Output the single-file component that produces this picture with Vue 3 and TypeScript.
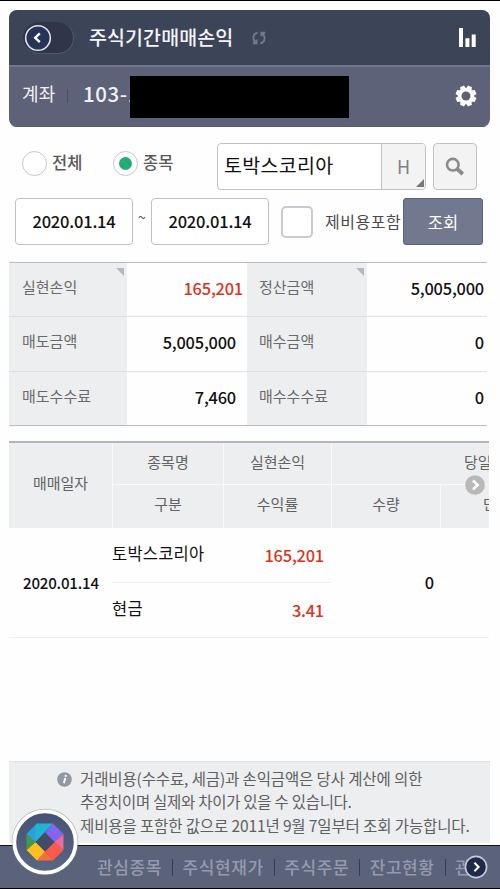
<script setup lang="ts">
interface SummaryCell {
  label: string
  value: string
  profit?: boolean
  corner?: boolean
}

const summary: SummaryCell[] = [
  { label: '실현손익', value: '165,201', profit: true, corner: true },
  { label: '정산금액', value: '5,005,000', corner: true },
  { label: '매도금액', value: '5,005,000' },
  { label: '매수금액', value: '0' },
  { label: '매도수수료', value: '7,460' },
  { label: '매수수수료', value: '0' },
]

const notices: string[] = [
  '거래비용(수수료, 세금)과 손익금액은 당사 계산에 의한',
  '추정치이며 실제와 차이가 있을 수 있습니다.',
  '제비용을 포함한 값으로 2011년 9월 7일부터 조회 가능합니다.',
]

const menus: string[] = ['관심종목', '주식현재가', '주식주문', '잔고현황', '관']
</script>

<template>
  <div class="screen">
    <header class="head">
      <div class="title-bar">
        <div class="back">
          <svg width="28" height="28" viewBox="0 0 28 28">
            <circle cx="14" cy="14" r="12.3" fill="#263457" stroke="#dfe1ee" stroke-width="1.6" />
            <path d="M15.8 9.4 L11.2 13.8 L15.8 18.2" fill="none" stroke="#fff" stroke-width="2.4" />
          </svg>
        </div>
        <h1>주식기간매매손익</h1>
        <svg class="refresh" width="14" height="14" viewBox="0 0 14 14" fill="none" stroke="#737a8b" stroke-width="1.9">
          <path d="M5.6 1.6 C.6 2.6 .2 8.6 3.6 11.4 M.8 12.2 H4.6 V8.6" />
          <path d="M8.4 12.4 C13.4 11.4 13.8 5.4 10.4 2.6 M13.2 1.8 H9.4 V5.4" />
        </svg>
        <svg class="bars" width="19" height="21" viewBox="0 0 19 21" fill="#fff">
          <path d="M1 1h4v19H1z M7.4 11.2h4V20h-4z M13.7 7.4h4V20h-4z" />
        </svg>
      </div>
      <div class="account">
        <span class="account-label">계좌</span>
        <i class="account-line"></i>
        <span class="account-no">103-1</span>
        <span class="mask"></span>
        <svg class="gear" width="22" height="22" viewBox="-11 -11 22 22">
          <g fill="#fff">
            <circle r="8" />
            <path v-for="n in 8" :key="n" d="M-3 -7 L-2.1 -10.4 H2.1 L3 -7z" :transform="`rotate(${n * 45 + 22.5})`" />
          </g>
          <circle r="4.5" fill="#5e6278" />
        </svg>
      </div>
    </header>

    <section class="filters">
      <div class="line first">
        <span class="radio"></span><span class="radio-text">전체</span>
        <span class="radio on"></span><span class="radio-text picked">종목</span>
        <div class="stock">
          <span class="stock-name">토박스코리아</span>
          <span class="history">H</span>
        </div>
        <div class="search">
          <svg width="20" height="20" viewBox="0 0 20 20" fill="none" stroke="#8b8b8b">
            <circle cx="7.8" cy="7.7" r="5.8" stroke-width="2.6" />
            <path d="M12.2 12 L17.8 17" stroke-width="3.8" />
          </svg>
        </div>
      </div>
      <div class="line dates">
        <span class="date">2020.01.14</span>
        <span class="tilde">~</span>
        <span class="date">2020.01.14</span>
        <span class="check"></span>
        <span class="check-text">제비용포함</span>
        <button class="query">조회</button>
      </div>
    </section>

    <section class="summary">
      <template v-for="cell in summary" :key="cell.label">
        <div class="s-label" :class="{ corner: cell.corner }">{{ cell.label }}</div>
        <div class="s-value" :class="{ profit: cell.profit }">{{ cell.value }}</div>
      </template>
    </section>

    <section class="trades">
      <div class="t-head">
        <div class="th tall">매매일자</div>
        <div class="th top">종목명</div>
        <div class="th top">실현손익</div>
        <div class="th top wide">당일</div>
        <div class="th">구분</div>
        <div class="th">수익률</div>
        <div class="th">수량</div>
        <div class="th clip">단</div>
        <svg class="more" width="20" height="20" viewBox="0 0 20 20">
          <circle cx="10" cy="10" r="9.8" fill="#b8b8b8" />
          <path d="M8 5.5 L12.6 10 L8 14.5" fill="none" stroke="#fff" stroke-width="2.6" />
        </svg>
      </div>
      <div class="t-row">
        <div class="td-date">2020.01.14</div>
        <div class="td name under">토박스코리아</div>
        <div class="td red under">165,201</div>
        <div class="td-qty">0</div>
        <div class="td name">현금</div>
        <div class="td red">3.41</div>
      </div>
    </section>

    <section class="notice">
      <svg class="info" width="15" height="15" viewBox="0 0 15 15">
        <circle cx="7.5" cy="7.5" r="7.3" fill="#9297a6" />
        <path d="M8.3 6 L6.9 11.3" stroke="#fff" stroke-width="1.9" />
        <circle cx="8.7" cy="3.9" r="1.1" fill="#fff" />
      </svg>
      <div class="notice-lines">
        <p v-for="(n, i) in notices" :key="i" :class="`n${i}`">{{ n }}</p>
      </div>
    </section>

    <nav class="bottom">
      <span v-for="(m, i) in menus" :key="i" class="menu">{{ m }}</span>
      <svg class="next" width="24" height="24" viewBox="0 0 24 24">
        <circle cx="12" cy="12" r="10.6" fill="#1f2a48" stroke="#c6c9d6" stroke-width="1.7" />
        <path d="M10.4 7.8 L14.6 12 L10.4 16.2" fill="none" stroke="#fff" stroke-width="2" />
      </svg>
      <svg class="home" width="70" height="70" viewBox="-35 -35 70 70">
        <defs>
          <linearGradient id="disc" x1="0" y1="0" x2="0" y2="1">
            <stop offset="0" stop-color="#465272" />
            <stop offset="1" stop-color="#5b6683" />
          </linearGradient>
        </defs>
        <circle r="33.3" fill="#777d8b" opacity=".55" />
        <circle r="30.7" fill="url(#disc)" stroke="#fff" stroke-width="3.8" />
        <path d="M-8 -18.5 H8 L-9.5 0 L-18.5 -8z" fill="#1fb4d4" />
        <path d="M-18.5 -8 L-9.5 -17 V0z" fill="#2b9edb" />
        <path d="M8 -18.5 L18.5 -8 L9.5 0 L0 -9.5z" fill="#8264ed" />
        <path d="M18.5 -8 V8 L9.5 0z" fill="#ee6a9d" />
        <path d="M9.5 0 L18.5 8 L8 18.5 L0 9.5z" fill="#ff594c" />
        <path d="M0 9.5 L8 18.5 H-8z" fill="#f3703d" />
        <path d="M-9.5 0 L0 9.5 L-8 18.5 L-18.5 8z" fill="#ffbf21" />
        <path d="M-18.5 -8 L-9.5 0 L-18.5 8z" fill="#3d9b4b" />
        <path d="M0 -9.5 L9.5 0 L0 9.5 L-9.5 0z" fill="#414c69" />
      </svg>
    </nav>
  </div>
</template>

<style>
body {
  margin: 0;
  background: #fff;
}
</style>

<style scoped>
* {
  box-sizing: border-box;
}
.screen {
  position: relative;
  width: 500px;
  height: 889px;
  overflow: hidden;
  display: flex;
  flex-direction: column;
  background: #fefefe;
  border-top: 1px solid #000;
  font-family: 'Noto Sans CJK KR', sans-serif;
  color: #111;
  white-space: nowrap;
}
.head {
  flex: none;
  width: 481px;
  height: 117px;
  margin: 9px 0 0 9px;
  border-radius: 8px;
  overflow: hidden;
}
.title-bar {
  height: 55px;
  background: #3c4458;
  display: flex;
  align-items: center;
}
.back {
  width: 51px;
  height: 32px;
  margin-left: 14px;
  border-radius: 16px;
  background: #303648;
  border-right: 1px solid #50586b;
  border-bottom: 1px solid #50586b;
}
.back svg {
  display: block;
  margin: 2px 0 0 1px;
}
h1 {
  width: 150px;
  margin: -2px 0 0 15px;
  font-size: 19.5px;
  line-height: 28px;
  font-weight: 500;
  color: #f4f5fa;
  letter-spacing: 0.1px;
}
.refresh {
  margin-left: 13px;
}
.bars {
  margin-left: auto;
  margin-right: 13px;
}
.account {
  height: 62px;
  background: #5e6278;
  border-top: 2px solid #70768c;
  border-bottom: 1px solid #555a70;
  display: flex;
  align-items: flex-start;
}
.account-label {
  width: 45px;
  margin: 13px 0 0 13px;
  font-size: 18px;
  line-height: 26px;
  color: #f1f2f7;
  letter-spacing: 0.1px;
}
.account-line {
  width: 1px;
  height: 14px;
  margin-top: 22px;
  background: #484d65;
}
.account-no {
  width: 47px;
  overflow: hidden;
  margin: 13px 0 0 15px;
  font-size: 20.5px;
  line-height: 26px;
  font-weight: 500;
  color: #f1f2f7;
  letter-spacing: 0.6px;
}
.mask {
  width: 219px;
  height: 42px;
  margin-top: 9px;
  background: #000;
}
.gear {
  margin: 18px 13px 0 auto;
}
.filters {
  flex: none;
  height: 135px;
  padding-top: 16px;
}
.line {
  display: flex;
  align-items: flex-start;
}
.first {
  height: 55px;
  padding-left: 22px;
}
.radio {
  width: 25px;
  height: 25px;
  margin-top: 8px;
  border: 1.5px solid #c6c7d0;
  border-radius: 50%;
  background: #fff;
  flex: none;
}
.on {
  display: grid;
  place-items: center;
}
.on::after {
  content: '';
  width: 13px;
  height: 13px;
  border-radius: 50%;
  background: #22ad75;
}
.radio-text {
  width: 61px;
  margin: 7px 0 0 5px;
  font-size: 16.5px;
  line-height: 24px;
  font-weight: 500;
  color: #595959;
}
.picked {
  width: 75px;
}
.stock {
  width: 209px;
  height: 47px;
  margin-left: -1px;
  border: 1.5px solid #c2c2c4;
  border-radius: 4px;
  background: #fff;
  display: flex;
  overflow: hidden;
  flex: none;
}
.stock-name {
  flex: 1;
  padding-left: 6px;
  font-size: 19.5px;
  line-height: 41px;
  letter-spacing: 0.3px;
}
.history {
  position: relative;
  width: 44px;
  border-left: 1px solid #c2c2c4;
  background: #f3f3f4;
  color: #818181;
  font-size: 18px;
  line-height: 44px;
  text-align: center;
}
.history::after {
  content: '';
  position: absolute;
  right: 1px;
  bottom: 2px;
  border-style: solid;
  border-width: 0 0 8px 8px;
  border-color: transparent transparent #777;
}
.search {
  width: 44px;
  height: 47px;
  margin-left: 7px;
  border: 1.5px solid #c2c2c4;
  border-radius: 4px;
  background: #f3f3f4;
  display: grid;
  place-items: center;
}
.dates {
  padding-left: 15px;
}
.date {
  width: 118px;
  height: 47px;
  border: 1.5px solid #c2c2c4;
  border-radius: 4px;
  background: #fff;
  font-size: 16.5px;
  line-height: 45px;
  font-weight: 500;
  text-align: center;
  letter-spacing: -0.2px;
  color: #111;
}
.tilde {
  width: 18px;
  text-align: center;
  font-size: 14px;
  line-height: 38px;
  color: #555;
}
.check {
  width: 32px;
  height: 32px;
  margin: 8px 0 0 12px;
  border: 2px solid #c9cad3;
  border-radius: 5px;
  background: #fff;
}
.check-text {
  width: 78px;
  margin-left: 12px;
  font-size: 16px;
  line-height: 46px;
  color: #4b4b4b;
  letter-spacing: 0.55px;
}
.query {
  width: 80px;
  height: 47px;
  padding: 0;
  border: 1.5px solid #5b6078;
  border-radius: 3px;
  background: #72788e;
  color: #fff;
  font-family: inherit;
  font-size: 16.5px;
  line-height: 44px;
}
.summary {
  flex: none;
  width: 478px;
  height: 164px;
  margin-left: 9px;
  display: grid;
  grid-template-columns: 118px 120px 120px 120px;
  grid-template-rows: 54px 55px 53px;
  border-top: 1px solid #bcbcbe;
  border-bottom: 1px solid #bcbcbe;
}
.s-label {
  position: relative;
  padding-left: 13px;
  background: #edeef0;
  color: #6a6a6c;
  font-size: 15px;
  line-height: 47px;
  border-bottom: 1px solid #dedfe4;
}
.s-label:nth-child(4n + 3) {
  padding-left: 12px;
}
.corner::after {
  content: '';
  position: absolute;
  top: 5px;
  right: 3px;
  border-style: solid;
  border-width: 0 8px 8px 0;
  border-color: transparent #b7b8bb transparent transparent;
}
.s-value {
  padding-right: 11px;
  text-align: right;
  font-size: 16.4px;
  font-weight: 500;
  line-height: 50px;
  letter-spacing: -0.2px;
  border-bottom: 1px solid #dedfe4;
}
.s-value:nth-child(4n) {
  padding-right: 3px;
}
.s-value.profit {
  padding-right: 4px;
  color: #d93420;
}
.s-label:nth-child(n + 9),
.s-value:nth-child(n + 9) {
  border-bottom: 0;
}
.trades {
  flex: none;
  width: 480px;
  margin: 15px 0 0 9px;
  overflow: hidden;
}
.t-head {
  position: relative;
  display: grid;
  grid-template-columns: 103px 111px 108px 109px 49px;
  grid-template-rows: 42px 43px;
  height: 87px;
  border-top: 2px solid #b4b5b8;
  overflow: hidden;
}
.th {
  background: #edeef0;
  border-left: 1px solid #fafafa;
  color: #626264;
  font-size: 15px;
  line-height: 37px;
  text-align: center;
  overflow: hidden;
}
.tall {
  grid-row: 1 / 3;
  line-height: 80px;
  border-left: 0;
}
.top {
  border-bottom: 1px solid #fafafa;
}
.wide {
  grid-column: 4 / 6;
  padding-left: 132px;
  text-align: left;
}
.clip {
  padding-left: 42px;
  text-align: left;
}
.more {
  position: absolute;
  left: 456px;
  top: 32px;
}
.t-row {
  display: grid;
  grid-template-columns: 103px 109px 110px 158px;
  grid-template-rows: 55px 54px;
  border-bottom: 1px solid #f0f0f0;
}
.td-date {
  grid-row: 1 / 3;
  padding-left: 14px;
  font-size: 15.1px;
  font-weight: 500;
  line-height: 109px;
  letter-spacing: -0.2px;
}
.td {
  font-size: 16.5px;
  line-height: 51px;
}
.under {
  border-bottom: 1px solid #f0f0f0;
}
.name {
  letter-spacing: 0.2px;
}
.red {
  padding-right: 7px;
  text-align: right;
  font-size: 16.4px;
  font-weight: 500;
  line-height: 54px;
  letter-spacing: -0.2px;
  color: #d93420;
}
.td-qty {
  grid-column: 4;
  grid-row: 1 / 3;
  padding-right: 55px;
  text-align: right;
  font-size: 16.4px;
  font-weight: 500;
  line-height: 108px;
}
.notice {
  flex: none;
  width: 481px;
  height: 82px;
  margin: auto 0 2px 9px;
  padding: 5px 0 0 48px;
  display: flex;
  align-items: flex-start;
  gap: 8px;
  background: #edeef0;
  border-top: 1px solid #dedfe2;
}
.info {
  margin-top: 5px;
}
.notice p {
  margin: 0;
  font-size: 15.5px;
  line-height: 23.3px;
  letter-spacing: -0.12px;
  color: #606062;
}
.notice .n1 {
  letter-spacing: -0.28px;
}
.bottom {
  position: relative;
  flex: none;
  height: 44px;
  padding-left: 97px;
  display: flex;
  align-items: center;
  background: #5b637b;
  border-top: 1px solid #10131d;
  border-bottom: 1px solid #000;
}
.menu {
  flex: none;
  position: relative;
  font-size: 17px;
  line-height: 24px;
  font-weight: 500;
  color: #959bae;
  letter-spacing: 0.6px;
}
.menu + .menu {
  margin-left: 10px;
  padding-left: 10.5px;
}
.menu + .menu::before {
  content: '';
  position: absolute;
  left: 0;
  top: 4px;
  width: 1px;
  height: 17px;
  background: #343b56;
}
.next {
  position: absolute;
  left: 464px;
  top: 9px;
}
.home {
  position: absolute;
  left: 10px;
  top: -39px;
}
</style>
